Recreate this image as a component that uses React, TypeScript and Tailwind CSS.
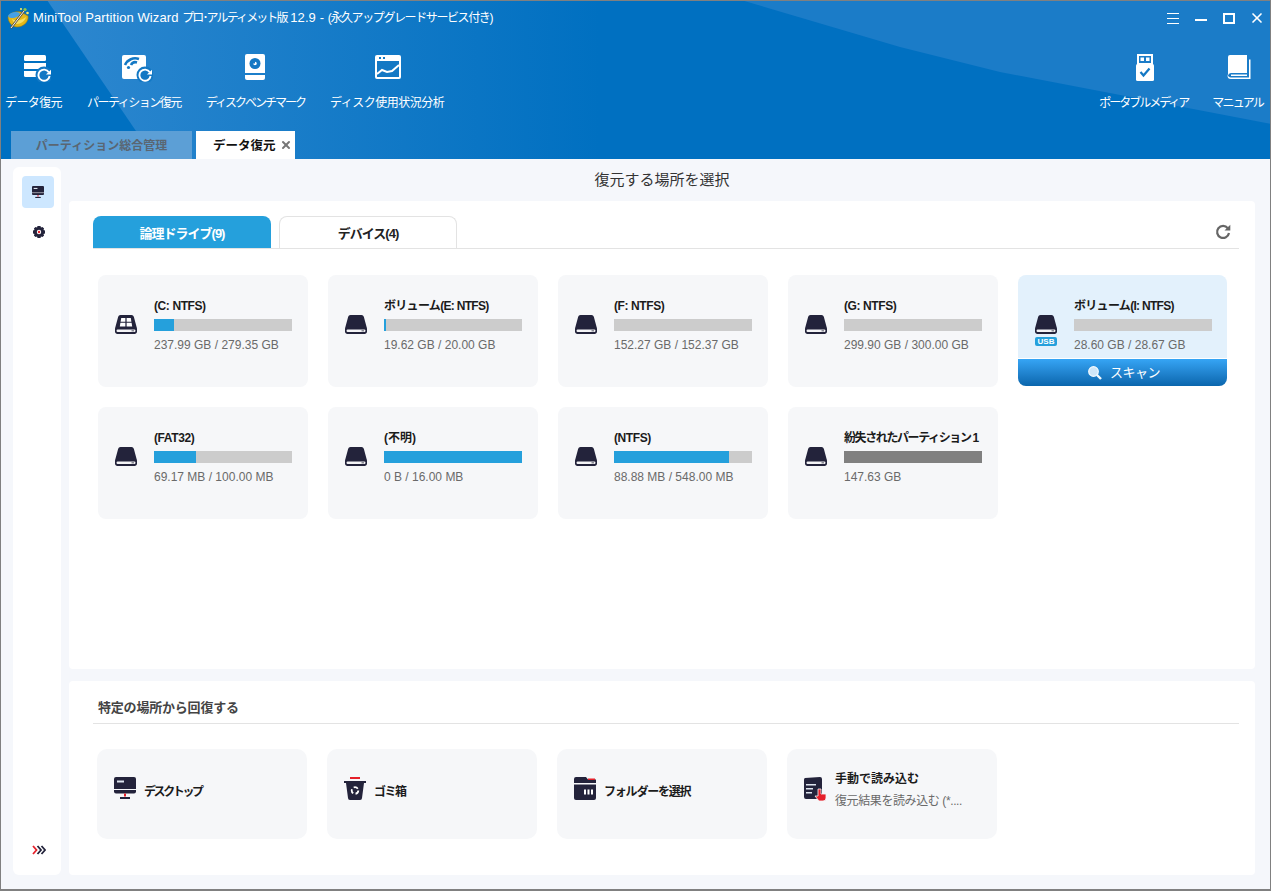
import { X } from "lucide-react";

const FONT = "font-['Liberation_Sans','Noto_Sans_CJK_JP',sans-serif]";

type Drive = {
  name: string;
  size: string;
  used: number;
  nameClass?: string;
  barColor?: string;
  windows?: boolean;
  usb?: boolean;
};

const drives: Drive[] = [
  { name: "(C: NTFS)", size: "237.99 GB / 279.35 GB", used: 20, windows: true, nameClass: "tracking-[-0.4px]" },
  { name: "ボリューム(E: NTFS)", size: "19.62 GB / 20.00 GB", used: 2, nameClass: "tracking-[-0.7px]" },
  { name: "(F: NTFS)", size: "152.27 GB / 152.37 GB", used: 0, nameClass: "tracking-[-0.4px]" },
  { name: "(G: NTFS)", size: "299.90 GB / 300.00 GB", used: 0, nameClass: "tracking-[-0.4px]" },
  { name: "ボリューム(I: NTFS)", size: "28.60 GB / 28.67 GB", used: 0, usb: true, nameClass: "tracking-[-0.7px]" },
  { name: "(FAT32)", size: "69.17 MB / 100.00 MB", used: 42, nameClass: "tracking-[-0.4px]" },
  { name: "(不明)", size: "0 B / 16.00 MB", used: 138 },
  { name: "(NTFS)", size: "88.88 MB / 548.00 MB", used: 115, nameClass: "tracking-[-0.4px]" },
  { name: "紛失されたパーティション 1", size: "147.63 GB", used: 138, barColor: "#808080", nameClass: "tracking-[-1.4px]" },
];

function RecoverArrow({ x, y }: { x: number; y: number }) {
  return (
    <g transform={`translate(${x} ${y})`}>
      <circle cx="7" cy="7" r="8.500" fill="#1378c4" />
      <path d="M11.800 4.200A5.600 5.600 0 1 0 12.600 8" fill="none" stroke="#fff" strokeWidth="1.900" />
      <path d="M9 6.600h5V1.800z" fill="#fff" />
    </g>
  );
}

function DataRecoveryIcon() {
  return (
    <svg className="ml-[7px]" width="28" height="28" viewBox="0 0 28 28">
      <rect x="1" y="1" width="22" height="6" rx="1.500" fill="#fff" />
      <rect x="1" y="9" width="22" height="6" fill="#fff" />
      <path d="M1 17h22v6H2.500A1.500 1.500 0 0 1 1 21.500z" fill="#fff" />
      <RecoverArrow x={14} y={14} />
    </svg>
  );
}

function PartitionRecoveryIcon() {
  return (
    <svg className="ml-[6px]" width="32" height="28" viewBox="0 0 32 28">
      <rect x="1" y="1" width="24" height="24" rx="2" fill="#fff" />
      <path d="M4 11a11 11 0 0 1 14-6" fill="none" stroke="#1378c4" strokeWidth="2.600" />
      <path d="M10 11a5 5 0 0 1 6-2.500" fill="none" stroke="#1378c4" strokeWidth="2.600" />
      <circle cx="7.500" cy="13.500" r="1.600" fill="#1378c4" />
      <RecoverArrow x={17} y={14} />
    </svg>
  );
}

function BenchmarkIcon() {
  return (
    <svg width="22" height="28" viewBox="0 0 22 28">
      <path d="M3 0h16a2 2 0 0 1 2 2v17H1V2a2 2 0 0 1 2-2z" fill="#fff" />
      <circle cx="11" cy="9.500" r="5.500" fill="#1378c4" />
      <path d="M11 7.700a1.800 1.800 0 1 1-1.800 1.800H11z" fill="#fff" />
      <path d="M1 21h20v3a2 2 0 0 1-2 2H3a2 2 0 0 1-2-2z" fill="#fff" />
    </svg>
  );
}

function UsageIcon() {
  return (
    <svg className="ml-[2px]" width="28" height="26" viewBox="0 0 28 26">
      <path d="M3 1h22a2 2 0 0 1 2 2v20a2 2 0 0 1-2 2H3a2 2 0 0 1-2-2V3a2 2 0 0 1 2-2z" fill="#fff" />
      <rect x="3" y="7" width="22" height="16" fill="#1378c4" />
      <rect x="5" y="3" width="2" height="2" fill="#1378c4" />
      <rect x="9" y="3" width="2" height="2" fill="#1378c4" />
      <path d="M3 20l5-4 5 2 5-1 7-6" fill="none" stroke="#fff" strokeWidth="2" />
    </svg>
  );
}

function UsbIcon() {
  return (
    <svg className="ml-[2px]" width="20" height="28" viewBox="0 0 20 28">
      <path d="M3 1h14v9H3z" fill="none" stroke="#fff" strokeWidth="2" />
      <rect x="5.500" y="3.500" width="3.500" height="3.500" fill="#fff" />
      <rect x="11" y="3.500" width="3.500" height="3.500" fill="#fff" />
      <rect x="1" y="10" width="18" height="17" rx="1.500" fill="#fff" />
      <path d="M5.500 18l3 3.500 6-7" fill="none" stroke="#1378c4" strokeWidth="2.200" />
    </svg>
  );
}

function BookIcon() {
  return (
    <svg className="ml-[2px]" width="24" height="26" viewBox="0 0 24 26">
      <path d="M3 1h17v18H4a3 3 0 0 0-3 2.500V3a2 2 0 0 1 2-2z" fill="#fff" />
      <path d="M22 5.500h1.500V25H4a3.500 3.500 0 0 1-3.500-3.500V20a4 4 0 0 0 3.500 3.500h18z" fill="#fff" />
      <path d="M4 20.500h16V22H4z" fill="#fff" />
    </svg>
  );
}

function AppLogo() {
  return (
    <svg width="24" height="24" viewBox="0 0 24 24">
      <path d="M2 11C3 7 10 5 15 6l7 4c1 5-4 11-11 11C6 21 2 16 2 11z" fill="#e4b818" stroke="#9a7a10" strokeWidth="0.600" />
      <path d="M6 13c3 2 9 2 14-2-1 4-5 7-9 7-2 0-4-2-5-5z" fill="#f6de60" />
      <ellipse cx="8" cy="9" rx="6" ry="2.800" transform="rotate(-12 8 9)" fill="#45a0e6" />
      <path d="M5 22L18 5" stroke="#5a5040" strokeWidth="2.200" />
      <path d="M5 22L18 5" stroke="#f8f4e4" strokeWidth="1" />
      <circle cx="19" cy="3.500" r="1.600" fill="#90c848" />
      <circle cx="21.500" cy="7" r="1.300" fill="#f8e868" />
      <circle cx="15" cy="3" r="1.100" fill="#f8e868" />
    </svg>
  );
}

function RefreshIcon() {
  return (
    <svg width="16" height="16" viewBox="0 0 16 16" className="mr-[8px] mb-[8px]">
      <path d="M12.800 4.200A6 6 0 1 0 14 9" fill="none" stroke="#666" strokeWidth="2.200" />
      <path d="M9.500 6.500h5.800V.800z" fill="#666" />
    </svg>
  );
}

function SearchGlyph() {
  return (
    <svg width="14" height="14" viewBox="0 0 14 14">
      <circle cx="5.500" cy="5.500" r="4.800" fill="#cfe6f8" stroke="#f4fafe" strokeWidth="1.200" />
      <path d="M9 9l4 4" stroke="#f4fafe" strokeWidth="2.400" />
    </svg>
  );
}

function DriveIcon({ windows }: { windows?: boolean }) {
  return (
    <svg width="22" height="19" viewBox="0 0 22 19">
      <path
        d="M5.500 0h11c1.200 0 2 .7 2.400 2l2.700 10c.3.800.4 1.300.4 2v2.500c0 1.400-1 2.500-2.500 2.500h-17C1 19 0 17.900 0 16.500V14c0-.7.100-1.200.4-2L3.100 2C3.500.7 4.300 0 5.500 0z"
        fill="#23233b"
      />
      <rect x="1.500" y="14.500" width="19" height="2.500" rx="1.200" fill="#f4f4f6" />
      <rect x="16.500" y="15" width="2.500" height="1.500" fill="#8a8a95" />
      {windows && (
        <g fill="#fff">
          <path d="M6.200 3H10.400V6.700H5.600z" />
          <path d="M11.600 3H15.800L16.400 6.700H11.600z" />
          <path d="M5.400 7.800H10.400V11.500H4.800z" />
          <path d="M11.600 7.800H16.600L17.200 11.500H11.600z" />
        </g>
      )}
    </svg>
  );
}

function DesktopIcon({ size = 22 }: { size?: number }) {
  return (
    <svg width={size} height={size} viewBox="0 0 22 22">
      <path d="M2 0h18a2 2 0 0 1 2 2v12.500a2 2 0 0 1-2 2H2a2 2 0 0 1-2-2V2a2 2 0 0 1 2-2z" fill="#23233b" />
      <rect x="3" y="3.500" width="7" height="2" fill="#dfe6f0" />
      <rect x="0" y="12" width="22" height="1" fill="#f6f7f9" />
      <rect x="10" y="16.500" width="2" height="3" fill="#e5202a" />
      <rect x="6" y="20" width="10" height="2" fill="#23233b" />
    </svg>
  );
}

function TrashIcon() {
  return (
    <svg width="22" height="23" viewBox="0 0 22 23">
      <rect x="6" y="0" width="10" height="2" fill="#e5202a" />
      <rect x="0" y="4" width="22" height="2" fill="#23233b" />
      <path d="M2 6h18l-2 15a2 2 0 0 1-2 2H6a2 2 0 0 1-2-2z" fill="#23233b" />
      <circle cx="11" cy="13.500" r="3.300" fill="none" stroke="#fff" strokeWidth="1.800" strokeDasharray="4.500 2.400" />
    </svg>
  );
}

function FolderIcon() {
  return (
    <svg width="22" height="23" viewBox="0 0 22 23">
      <path d="M0 2a2 2 0 0 1 2-2h10l2 2.500h8V6H0z" fill="#23233b" />
      <rect x="14" y="1.500" width="7" height="1.500" fill="#e5202a" />
      <path d="M0 7.500h22V21a2 2 0 0 1-2 2H2a2 2 0 0 1-2-2z" fill="#23233b" />
      <g fill="#fff">
        <rect x="10" y="12.500" width="2" height="5" />
        <rect x="13.500" y="12.500" width="2" height="5" />
        <rect x="17" y="12.500" width="2" height="5" />
      </g>
    </svg>
  );
}

function ManualLoadIcon() {
  return (
    <svg width="24" height="24" viewBox="0 0 24 24">
      <path d="M2 1l15-1a2 2 0 0 1 2 2v18a2 2 0 0 1-2 2H3a2 2 0 0 1-2-2V3a2 2 0 0 1 1-2z" fill="#23233b" />
      <rect x="3" y="7" width="10" height="1.500" fill="#dfe6f0" />
      <rect x="3" y="11" width="7" height="1.500" fill="#dfe6f0" />
      <rect x="3" y="15" width="6" height="1.500" fill="#dfe6f0" />
      <path d="M15 12h3v5h5v4a3 3 0 0 1-3 3h-4l-4-5h3z" fill="#e5202a" stroke="#f6f7f9" strokeWidth="0.800" />
    </svg>
  );
}

function ToolButton({ icon, label, textClass }: { icon: React.ReactNode; label: string; textClass: string }) {
  return (
    <div className="flex flex-col items-center text-white">
      <div className="flex h-[30px] items-start">{icon}</div>
      <span className={`mt-[11px] text-[12px] leading-[16px] whitespace-nowrap ${textClass}`}>{label}</span>
    </div>
  );
}

function DriveCard({ drive }: { drive: Drive }) {
  return (
    <div
      className={`flex flex-col overflow-hidden rounded-[8px] ${drive.usb ? "mr-[1px] mb-[1px] h-[111px] bg-[#e3f1fc]" : "h-[112px] bg-[#f6f7f9]"}`}
    >
      <div className="flex flex-1 pl-[17px]">
        <div className="flex w-[22px] flex-col items-center pt-[40px]">
          <DriveIcon windows={drive.windows} />
          {drive.usb && (
            <span className="mt-[3px] flex h-[9px] w-[22px] items-center justify-center rounded-[2px] bg-[#25a0dc] text-[8px] leading-none font-bold text-white">
              USB
            </span>
          )}
        </div>
        <div className="ml-[17px] w-[138px] pt-[23px]">
          <p className={`h-[16px] text-[12px] leading-[16px] font-bold whitespace-nowrap text-[#1b1b1b] ${drive.nameClass ?? ""}`}>
            {drive.name}
          </p>
          <div className="mt-[5px] h-[12px] bg-[#cccccc]">
            <div className="h-full bg-[#25a0dc]" style={{ width: drive.used, backgroundColor: drive.barColor }} />
          </div>
          <p className="mt-[6px] text-[12px] leading-[16px] whitespace-nowrap text-[#6a6a6a]">{drive.size}</p>
        </div>
      </div>
      {drive.usb && (
        <div className="flex h-[28px] items-center justify-center gap-[8px] border-t border-white bg-linear-to-b from-[#36a5f5] to-[#0a66ad] pl-[3px] text-[13px] tracking-[-0.5px] text-white">
          <SearchGlyph />
          スキャン
        </div>
      )}
    </div>
  );
}

function PlaceCard({ icon, label, textClass }: { icon: React.ReactNode; label: string; textClass: string }) {
  return (
    <div className="flex h-[90px] items-start gap-[8px] rounded-[10px] bg-[#f6f7f9] pt-[28px] pl-[17px]">
      {icon}
      <span className={`mt-[5px] pt-[2px] text-[12px] leading-[16px] font-bold text-[#1b1b1b] ${textClass}`}>{label}</span>
    </div>
  );
}

export default function App() {
  return (
    <div
      className={`flex h-[891px] w-[1271px] flex-col overflow-hidden border-x border-t border-b-2 border-[#808080] bg-[#f5f7fb] ${FONT}`}
    >
      {/* header */}
      <header className="relative h-[158px] shrink-0 overflow-hidden bg-[#0070c1]">
        <svg className="absolute top-[-1px] left-[-1px]" width="1271" height="160" viewBox="0 0 1271 160">
          <defs>
            <linearGradient id="band" x1="0" y1="0" x2="1" y2="0">
              <stop offset="0" stopColor="#2d87cf" />
              <stop offset="1" stopColor="#0070c1" />
            </linearGradient>
          </defs>
          <path d="M47 0L155 159H400L600 159V0z" fill="url(#band)" />
          <path d="M741 0L900 47L1000 72L1271 124V0z" fill="#1b7cc8" />
        </svg>

        <div className="relative flex h-full flex-col">
          <div className="flex h-[36px] items-start justify-between">
            <div className="flex items-center gap-[3px] pt-[5px] pl-[5px]">
              <AppLogo />
              <span className="text-[13px] leading-[24px] tracking-[0.1px] whitespace-nowrap text-white">
                MiniTool Partition Wizard{" "}
                <span className="text-[12px] tracking-[-1.9px]">プロ･アルティメット版</span> 12.9 -{" "}
                <span className="text-[12px] tracking-[-1.4px]">(永久アップグレードサービス付き)</span>
              </span>
            </div>
            <div className="flex items-center gap-[12px] pt-[9px] pr-[5px] text-white">
              <svg width="16" height="16" viewBox="0 0 16 16">
                <path d="M2 3.500h12M2 8.500h12M2 13.500h12" stroke="#fff" strokeWidth="1" />
              </svg>
              <div className="flex h-[16px] w-[16px] items-center justify-center">
                <div className="mt-[4px] h-[2px] w-[12px] bg-white" />
              </div>
              <div className="flex h-[16px] w-[16px] items-center justify-center">
                <div className="h-[11px] w-[12px] border-2 border-white" />
              </div>
              <X size={16} strokeWidth={2.5} />
            </div>
          </div>

          <div className="flex h-[94px] items-start justify-between pt-[17px] pr-[7px] pl-[4px]">
            <div className="flex gap-[25px]">
              <ToolButton icon={<DataRecoveryIcon />} label="データ復元" textClass="tracking-[-0.6px]" />
              <ToolButton icon={<PartitionRecoveryIcon />} label="パーティション復元" textClass="tracking-[-1.5px]" />
              <ToolButton icon={<BenchmarkIcon />} label="ディスクベンチマーク" textClass="tracking-[-2px]" />
              <ToolButton icon={<UsageIcon />} label="ディスク使用状況分析" textClass="tracking-[-0.5px]" />
            </div>
            <div className="flex gap-[24px]">
              <ToolButton icon={<UsbIcon />} label="ポータブルメディア" textClass="tracking-[-2px]" />
              <ToolButton icon={<BookIcon />} label="マニュアル" textClass="tracking-[-1.8px]" />
            </div>
          </div>

          <div className="flex h-[28px] items-stretch gap-[4px] pl-[10px]">
            <div className="flex w-[181px] items-center justify-center bg-[#5c9fd6] pt-[2px] text-[12px] font-bold text-[#5a6672]">
              パーティション総合管理
            </div>
            <div className="flex w-[99px] items-center bg-white pt-[2px] pl-[17px] text-[12.500px] font-bold text-[#111]">
              データ復元
              <X size={12} strokeWidth={4} className="mb-[2px] ml-[4px] text-[#777]" />
            </div>
          </div>
        </div>
      </header>

      {/* body */}
      <div className="flex flex-1 gap-[8px] pt-[8px] pr-[15px] pb-[14px] pl-[12px]">
        <aside className="flex w-[48px] flex-col items-center justify-between rounded-[6px] bg-white pt-[9px] pb-[20px] pl-[3px]">
          <div className="flex flex-col items-center gap-[12px] pr-[1px]">
            <div className="flex h-[32px] w-[32px] items-center justify-center rounded-[4px] bg-[#cde7ff]">
              <DesktopIcon size={12} />
            </div>
            <svg width="24" height="24" viewBox="4 4 24 24" className="ml-[1px]">
              <path
                d="M14 10h4l.600 2 2-.800 2.200 2.200-.800 2 2 .600v4l-2 .600.800 2-2.200 2.200-2-.800-.600 2h-4l-.600-2-2 .800-2.200-2.200.800-2-2-.600v-4l2-.600-.800-2 2.200-2.200 2 .800z"
                transform="translate(16 16) scale(0.75) translate(-16 -18)"
                fill="#23233b"
              />
              <circle cx="16" cy="16" r="2.200" fill="#fff" />
              <circle cx="16" cy="16" r="1.200" fill="#e5202a" />
            </svg>
          </div>
          <svg width="14" height="10" viewBox="0 0 14 10">
            <path d="M1 1l3.500 4L1 9" fill="none" stroke="#e5202a" strokeWidth="1.800" />
            <path d="M5.500 1L9 5 5.500 9" fill="none" stroke="#23233b" strokeWidth="1.800" />
            <path d="M9.500 1L13 5 9.500 9" fill="none" stroke="#23233b" strokeWidth="1.800" />
          </svg>
        </aside>

        <main className="flex flex-1 flex-col">
          <h1 className="flex h-[34px] shrink-0 items-center justify-center pb-[8px] text-[15px] font-normal text-[#333]">
            復元する場所を選択
          </h1>

          <section className="h-[468px] shrink-0 rounded-[4px] bg-white pt-[15px] pr-[16px] pl-[24px]">
            <div className="flex h-[33px] items-end justify-between border-b border-[#e3e3e3]">
              <div className="flex gap-[8px]">
                <div className="flex h-[32px] w-[178px] items-center justify-center rounded-t-[8px] bg-[#25a0dc] pt-[3px] text-[13px] font-bold tracking-[-1px] text-white">
                  論理ドライブ(9)
                </div>
                <div className="flex h-[32px] w-[178px] items-center justify-center rounded-t-[8px] border border-b-0 border-[#e3e3e3] pt-[3px] text-[13px] font-bold tracking-[-1px] text-[#222]">
                  デバイス(4)
                </div>
              </div>
              <RefreshIcon />
            </div>
            <div className="grid grid-cols-[repeat(5,210px)] gap-[20px] pt-[26px] pl-[5px]">
              {drives.map((d) => (
                <DriveCard key={d.name} drive={d} />
              ))}
            </div>
          </section>

          <section className="mt-[12px] flex-1 rounded-[4px] bg-white pt-[17px] pr-[16px] pl-[24px]">
            <h2 className="h-[26px] border-b border-[#e3e3e3] pt-[1px] pl-[5px] text-[13px] leading-[18px] font-bold tracking-[-0.2px] text-[#444]">
              特定の場所から回復する
            </h2>
            <div className="grid grid-cols-[repeat(4,210px)] gap-[20px] pt-[25px] pl-[4px]">
              <PlaceCard icon={<DesktopIcon />} label="デスクトップ" textClass="tracking-[-2.4px]" />
              <PlaceCard icon={<TrashIcon />} label="ゴミ箱" textClass="tracking-[-1.5px]" />
              <PlaceCard icon={<FolderIcon />} label="フォルダーを選択" textClass="tracking-[-1.2px]" />
              <div className="flex h-[90px] items-start gap-[8px] rounded-[10px] bg-[#f6f7f9] pt-[28px] pl-[16px]">
                <ManualLoadIcon />
                <div className="mt-[-6px]">
                  <p className="text-[12px] leading-[16px] font-bold text-[#1b1b1b]">手動で読み込む</p>
                  <p className="mt-[6px] text-[12px] leading-[16px] tracking-[-0.4px] text-[#6a6a6a]">
                    復元結果を読み込む (*....
                  </p>
                </div>
              </div>
            </div>
          </section>
        </main>
      </div>
    </div>
  );
}
